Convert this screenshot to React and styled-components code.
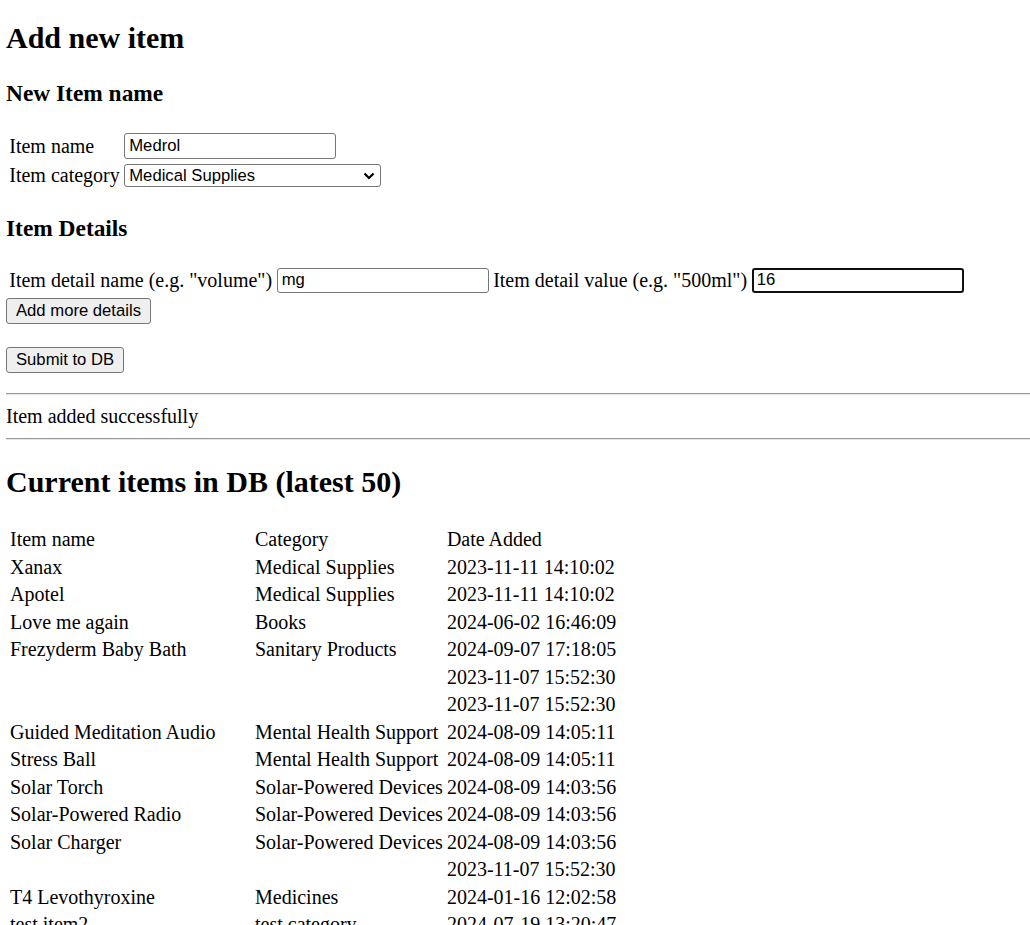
import React, { useState } from "react";
import styled, { createGlobalStyle } from "styled-components";

const GlobalStyle = createGlobalStyle`
  html, body {
    margin: 0;
    padding: 0;
    background: #fff;
  }
  body {
    font-family: "Liberation Serif", "Times New Roman", serif;
    font-size: 20px;
    color: #000;
  }
`;

const categories = [
  "Medical Supplies",
  "Medicines",
  "Books",
  "Sanitary Products",
  "Mental Health Support",
  "Solar-Powered Devices",
  "test category",
];

const items = [
  { name: "Xanax", category: "Medical Supplies", date: "2023-11-11 14:10:02" },
  { name: "Apotel", category: "Medical Supplies", date: "2023-11-11 14:10:02" },
  { name: "Love me again", category: "Books", date: "2024-06-02 16:46:09" },
  { name: "Frezyderm Baby Bath", category: "Sanitary Products", date: "2024-09-07 17:18:05" },
  { name: "", category: "", date: "2023-11-07 15:52:30" },
  { name: "", category: "", date: "2023-11-07 15:52:30" },
  { name: "Guided Meditation Audio", category: "Mental Health Support", date: "2024-08-09 14:05:11" },
  { name: "Stress Ball", category: "Mental Health Support", date: "2024-08-09 14:05:11" },
  { name: "Solar Torch", category: "Solar-Powered Devices", date: "2024-08-09 14:03:56" },
  { name: "Solar-Powered Radio", category: "Solar-Powered Devices", date: "2024-08-09 14:03:56" },
  { name: "Solar Charger", category: "Solar-Powered Devices", date: "2024-08-09 14:03:56" },
  { name: "", category: "", date: "2023-11-07 15:52:30" },
  { name: "T4 Levothyroxine", category: "Medicines", date: "2024-01-16 12:02:58" },
  { name: "test item2", category: "test category", date: "2024-07-19 13:20:47" },
];

export default function App() {
  const [name, setName] = useState("Medrol");
  const [category, setCategory] = useState("Medical Supplies");
  const [details, setDetails] = useState([{ key: "mg", value: "16" }]);

  const updateDetail = (i, field, v) => {
    setDetails((d) => d.map((row, j) => (j === i ? { ...row, [field]: v } : row)));
  };

  return (
    <Page>
      <GlobalStyle />
      <Title $top={20}>Add new item</Title>

      <SubTitle $top={24.6}>New Item name</SubTitle>
      <FormTable $top={23.65}>
        <tbody>
          <tr>
            <Cell>Item name</Cell>
            <Cell>
              <TextInput value={name} onChange={(e) => setName(e.target.value)} />
            </Cell>
          </tr>
          <tr>
            <Cell>Item category</Cell>
            <Cell>
              <SelectWrap>
                <Select value={category} onChange={(e) => setCategory(e.target.value)}>
                  {categories.map((c) => (
                    <option key={c}>{c}</option>
                  ))}
                </Select>
                <Chevron width="12" height="8" viewBox="0 0 12 8">
                  <path d="M1.5 1.5 L6 6 L10.5 1.5" fill="none" stroke="#000" strokeWidth="2.2" />
                </Chevron>
              </SelectWrap>
            </Cell>
          </tr>
        </tbody>
      </FormTable>

      <SubTitle $top={24.85}>Item Details</SubTitle>
      <FormTable $top={22.65}>
        <tbody>
          {details.map((d, i) => (
            <tr key={i}>
              <Cell>Item detail name (e.g. "volume")</Cell>
              <Cell>
                <TextInput $h={25} value={d.key} onChange={(e) => updateDetail(i, "key", e.target.value)} />
              </Cell>
              <Cell>Item detail value (e.g. "500ml")</Cell>
              <Cell>
                <TextInput
                  $h={25}
                  $focused={i === details.length - 1}
                  value={d.value}
                  onChange={(e) => updateDetail(i, "value", e.target.value)}
                />
              </Cell>
            </tr>
          ))}
        </tbody>
      </FormTable>
      <Button $top={2} onClick={() => setDetails((d) => [...d, { key: "", value: "" }])}>
        Add more details
      </Button>
      <Button $top={23}>Submit to DB</Button>

      <Rule $top={20} />
      <Message>Item added successfully</Message>
      <Rule $top={10} />

      <Title $top={23.4}>Current items in DB (latest 50)</Title>
      <ItemsTable>
        <thead>
          <tr>
            <ItemCell $first>Item name</ItemCell>
            <ItemCell>Category</ItemCell>
            <ItemCell>Date Added</ItemCell>
          </tr>
        </thead>
        <tbody>
          {items.map((it, i) => (
            <tr key={i}>
              <ItemCell $first>{it.name}</ItemCell>
              <ItemCell>{it.category}</ItemCell>
              <ItemCell>{it.date}</ItemCell>
            </tr>
          ))}
        </tbody>
      </ItemsTable>
    </Page>
  );
}

const Page = styled.div`
  display: flex;
  flex-direction: column;
  align-items: flex-start;
  padding: 0 0 40px 6px;
  min-height: 925px;
`;

const Title = styled.h2`
  font-size: 30px;
  line-height: 35px;
  font-weight: bold;
  margin: ${(p) => p.$top}px 0 0;
`;

const SubTitle = styled.h3`
  font-size: 23.4px;
  line-height: 27px;
  font-weight: bold;
  margin: ${(p) => p.$top}px 0 0;
`;

const FormTable = styled.table`
  border-spacing: 2.5px;
  margin-top: ${(p) => p.$top}px;
  font-size: 20px;
`;

const Cell = styled.td`
  padding: 1.25px;
  line-height: 23px;
  white-space: nowrap;
  vertical-align: middle;
`;

const TextInput = styled.input`
  box-sizing: border-box;
  width: 212px;
  height: ${(p) => p.$h || 26}px;
  margin: 0;
  padding: 0 4px;
  font-family: "Liberation Sans", Arial, sans-serif;
  font-size: 16.67px;
  color: #000;
  background: #fff;
  border: ${(p) => (p.$focused ? "2px solid #101010" : "1px solid #767676")};
  border-radius: 3px;
  padding-left: ${(p) => (p.$focused ? 3 : 4)}px;
  outline: none;
  display: block;
`;

const SelectWrap = styled.div`
  position: relative;
  width: 257px;
`;

const Select = styled.select`
  appearance: none;
  box-sizing: border-box;
  width: 257px;
  height: 23px;
  margin: 0;
  padding: 0 24px 0 4px;
  font-family: "Liberation Sans", Arial, sans-serif;
  font-size: 16.67px;
  color: #000;
  background: #fff;
  border: 1px solid #767676;
  border-radius: 3px;
  display: block;
  outline: none;
`;

const Chevron = styled.svg`
  position: absolute;
  right: 6px;
  top: 8px;
  pointer-events: none;
`;

const Button = styled.button`
  box-sizing: border-box;
  height: 26px;
  margin: ${(p) => p.$top}px 0 0;
  padding: 0 9px;
  font-family: "Liberation Sans", Arial, sans-serif;
  font-size: 16.67px;
  color: #000;
  background: #efefef;
  border: 1px solid #767676;
  border-radius: 3px;
`;

const Rule = styled.hr`
  align-self: stretch;
  margin: ${(p) => p.$top}px 0 0;
  height: 0;
  border: none;
  border-top: 1px solid #9a9a9a;
  border-bottom: 1px solid #e6e6e6;
`;

const Message = styled.div`
  margin-top: 10px;
  line-height: 23px;
`;

const ItemsTable = styled.table`
  border-spacing: 2.5px 3px;
  margin: 25.6px 0 0 1px;
  font-size: 20px;
`;

const ItemCell = styled.td`
  padding: 1px;
  line-height: 22.5px;
  height: 22.5px;
  text-align: left;
  white-space: nowrap;
  width: ${(p) => (p.$first ? "241px" : "auto")};
`;
